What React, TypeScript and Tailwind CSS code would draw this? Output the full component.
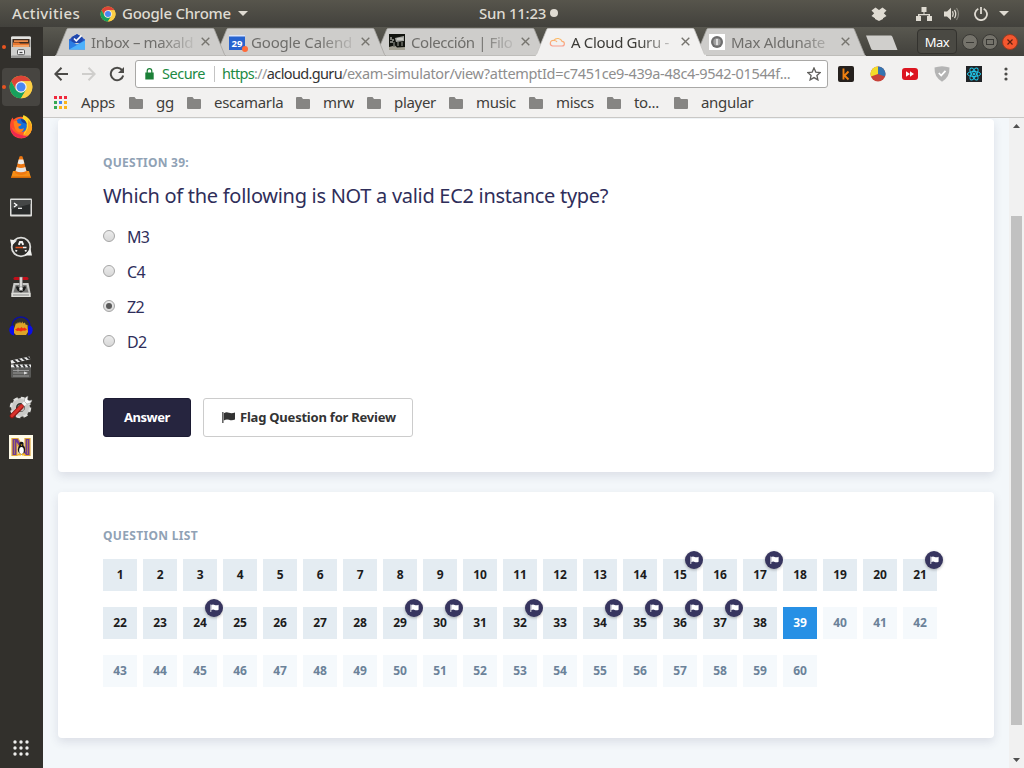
import type { ReactNode } from 'react';

const flagged = new Set([15, 17, 21, 24, 29, 30, 32, 34, 35, 36, 37]);
const CURRENT = 39;
const TOTAL = 60;

function ChromeIcon({ className }: { className: string }) {
  return (
    <svg viewBox="0 0 24 24" className={className}>
      <circle cx="12" cy="12" r="11.3" fill="#fbc93d" />
      <path d="M2.2 6.3A11.3 11.3 0 0 1 21.8 6.3H12L7 14.8Z" fill="#dd4437" />
      <path d="M2.2 6.3A11.3 11.3 0 0 0 12 23.3L17 14.9 12 17.5 7 14.9Z" fill="#17a05d" />
      <path d="M12 6.3H21.8A11.3 11.3 0 0 1 12 23.3L17 14.9Z" fill="#fdcf45" />
      <circle cx="12" cy="12" r="5.7" fill="#f4f4f4" />
      <circle cx="12" cy="12" r="4.5" fill="#4a87f2" />
    </svg>
  );
}

function FilesIcon() {
  return (
    <svg viewBox="0 0 24 24" className="size-6">
      <rect x="2" y="1.5" width="20" height="21.5" rx="1.5" fill="#b9b9b7" />
      <rect x="2" y="1.5" width="20" height="3" rx="1" fill="#e3e3e1" />
      <rect x="3.5" y="4" width="17" height="9" fill="#3d2b20" />
      <path d="M5 5.2H19V7H5Z" fill="#e88a4a" />
      <path d="M4 7.4H10L11 8.4H20V13H4Z" fill="#e9772f" />
      <path d="M4 10H20V13H4Z" fill="#f2a468" />
      <rect x="2" y="12" width="20" height="11" rx="1" fill="#cfcfcd" />
      <rect x="2" y="20.5" width="20" height="2.5" rx="1" fill="#989896" />
      <rect x="8.5" y="14.7" width="7" height="5" rx="1" fill="#f5f5f5" stroke="#555" />
      <path d="M10.5 17.5H13.5" stroke="#444" strokeWidth="1.3" />
    </svg>
  );
}

function FirefoxIcon() {
  return (
    <svg viewBox="0 0 24 24" className="size-6">
      <circle cx="12" cy="12.5" r="10.8" fill="#ff5a28" />
      <path d="M1.200 12Q.8 6 3.500 2.500L5 5.500L8 5L7 14Z" fill="#ff4a2a" />
      <path d="M14.500 0Q21.500 3 23 10Q23.800 17 17 22Q12 20 17 15Q19 9 14 5Q13 2.500 14.500 0Z" fill="#ffd829" />
      <path d="M19 5Q23.500 9 23 14Q21 22 12 23.300Q17 18 19 13Z" fill="#ffa21f" />
      <path d="M7.500 5.500Q10 2.500 14 4Q18 6.500 17.700 11.500Q17 17 12 17Q7.500 16.500 6.500 12Z" fill="#1470dc" />
      <path d="M12 4Q17 4 18 10Q17 8 15 8Q12 7 12 4Z" fill="#1b3f9b" />
      <path d="M4.500 6.500L8 5.500Q8 8 10 8.500L12.500 9Q12 11 9.500 11.500Q9 13.700 11.500 14Q14 14 15 13Q14 17.500 10 17.500Q5 16 4.500 6.500Z" fill="#ff7d1b" />
      <path d="M1.300 10Q1 22 12 23.300Q17 23 19.500 20.500Q14 21.500 9 19Q3 16.500 1.300 10Z" fill="#ee2950" />
    </svg>
  );
}

function VlcIcon() {
  return (
    <svg viewBox="0 0 24 24" className="size-6">
      <path d="M4 16H20L22 23H2Z" fill="#f58e16" />
      <path d="M2.300 21.500H21.700L22 23H2Z" fill="#d56a08" />
      <path d="M10.500 1.500Q12 .5 13.500 1.500L18 18Q12 22 6 18Z" fill="#ee7711" />
      <path d="M9.700 4.500H14.300L15.400 8.500Q12 10 8.600 8.500Z" fill="#ececec" />
      <path d="M7.700 12Q12 14 16.300 12L17.400 16Q12 18.500 6.600 16Z" fill="#e4e4e4" />
    </svg>
  );
}

function TerminalIcon() {
  return (
    <svg viewBox="0 0 24 24" className="size-6">
      <rect x="1" y="3.500" width="22" height="18" rx="1" fill="#dededc" />
      <rect x="2.500" y="5" width="19" height="14.500" fill="#292b2b" />
      <path d="M2.500 5H21.500V9L2.500 14Z" fill="#454747" />
      <path d="M5 8L7.800 10 5 12" fill="none" stroke="#fff" strokeWidth="1.300" />
      <path d="M9 13.300H13" stroke="#fff" strokeWidth="1.200" />
    </svg>
  );
}

function UpdaterIcon() {
  return (
    <svg viewBox="0 0 24 24" className="size-6">
      <circle cx="12" cy="12" r="9.300" fill="#2c2b28" stroke="#dcdcda" strokeWidth="1.800" />
      <path d="M1 4.500L8 5.500 2.500 11Z" fill="#f0f0ee" />
      <path d="M23 20.500L15.500 20.500 21.500 14Z" fill="#f0f0ee" />
      <path d="M9.800 9.800L11 7H13L14.200 9.800M7 16.500L7.500 15M17 16.500L16.500 15" fill="none" stroke="#f4f4f4" strokeWidth="2" />
      <path d="M6.500 12.500H14" stroke="#e95420" strokeWidth="1.500" />
      <path d="M14 12.500H17.500" stroke="#eee" strokeWidth="1.500" />
    </svg>
  );
}

function InstallerIcon() {
  return (
    <svg viewBox="0 0 24 24" className="-mt-[1px] size-6">
      <path d="M4.500 8H19.500L21.500 18V22H2.500V18Z" fill="#c9c9c7" />
      <path d="M6.500 10H17.500L19.500 17.500H4.500Z" fill="#747472" />
      <path d="M2.500 18H21.500V22H2.500Z" fill="#deded9" />
      <path d="M4 20H20" stroke="#888" />
      <rect x="4.500" y="2" width="15" height="3" rx="1.500" fill="#c00f1a" />
      <path d="M10.500 2H13.500V12H10.500Z" fill="#d8d8d6" stroke="#666" strokeWidth=".5" />
      <path d="M7 12Q8 10.500 10 12.500V16H14V12.500Q16 10.500 17 12Q16.500 16 12 17.500Q7.500 16 7 12Z" fill="#191919" />
      <circle cx="12" cy="13.500" r="1.500" fill="#f4f4f4" />
    </svg>
  );
}

function AudacityIcon() {
  return (
    <svg viewBox="0 0 24 24" className="size-6">
      <path d="M5 14L7 8 8 9 9 7 10 8.500 11 6.500 12 8.500 13.500 6.500 14 8.500 16 7.500 16.500 9.500 18.500 10 19 17 17 20H7L5 18Z" fill="#dda428" />
      <path d="M6 14.500L8 13.500 9 12.500 11 13.500 12.500 12 14 13.500 15.500 12.500 18 14.500 16 15.800 14 15.500 12 16.500 10 15.700 8 16Z" fill="#f42c10" />
      <path d="M3 15V11A9 9 0 0 1 21 11V15" fill="none" stroke="#0d119f" strokeWidth="1.600" />
      <path d="M5 10.500Q0 10.500 .3 15.500Q1 20 5 20.500Z" fill="#0b0ee8" />
      <path d="M19 10.500Q24 10.500 23.700 15.500Q23 20 19 20.500Z" fill="#0b0ee8" />
    </svg>
  );
}

function ClapperIcon() {
  return (
    <svg viewBox="0 0 24 24" className="-mt-[1px] size-6">
      <path d="M1.500 5.500L20.500 1.500 21.300 4.200 2.300 8.700Z" fill="#eee" />
      <path d="M4.500 5L8 7.800M9 4L12.500 6.600M13.500 3.100L17 5.400M18 2L21 4" stroke="#333" strokeWidth="1.800" />
      <rect x="2" y="9.800" width="20" height="13" rx="1" fill="#5a5a58" />
      <rect x="2" y="9.500" width="20" height="2.800" fill="#eee" />
      <path d="M5 9.500L7 12.500M9.500 9.500L11.500 12.500M14 9.500L16 12.500M18.500 9.500L20.500 12.500" stroke="#333" strokeWidth="1.800" />
      <path d="M4 15.500H20M4 18H18M9 13.500V17M4 21H20" stroke="#aaa" strokeWidth=".8" />
      <path d="M15 16.500L19 18 15 19.500Z" fill="#ddd" />
    </svg>
  );
}

function ToolsIcon() {
  return (
    <svg viewBox="0 0 24 24" className="size-6">
      <circle cx="11.500" cy="12.500" r="7" fill="none" stroke="#c9c9c7" strokeWidth="5" />
      <circle cx="11.500" cy="12.500" r="9.600" fill="none" stroke="#dededc" strokeWidth="2.400" strokeDasharray="4.500 3.040" />
      <circle cx="12" cy="13" r="3.500" fill="#b8b8b6" />
      <path d="M13 11L18.500 5.500" stroke="#f4f4f4" strokeWidth="3.500" />
      <path d="M15.500 6.500Q15 2 19 1.200L18.500 4.500 20 5.800 23 5Q22.500 9 18 9Z" fill="#f7f7f7" stroke="#8a8a88" strokeWidth=".5" />
      <path d="M3 21L12.500 11.500" stroke="#8f1512" strokeWidth="4.600" strokeLinecap="round" />
      <path d="M3 20.700L12.500 11.200" stroke="#d9322c" strokeWidth="3" strokeLinecap="round" />
    </svg>
  );
}

function NetIcon() {
  return (
    <svg viewBox="0 0 24 24" className="size-6">
      <rect width="24" height="24" fill="#fffbe9" />
      <path d="M3 3.500H9L16 15V3.500H21V20.500H16L8 9V20.500H3Z" fill="#713a92" stroke="#e0a637" strokeWidth="1.200" />
      <path d="M5.500 5V19M18.500 5V19" stroke="#b58a4a" strokeWidth=".8" />
      <ellipse cx="12.500" cy="14.500" rx="3.600" ry="5" fill="#151515" />
      <circle cx="12.500" cy="9" r="2.200" fill="#151515" />
      <ellipse cx="12.500" cy="15.500" rx="2.300" ry="3.600" fill="#fff" />
      <path d="M11.500 9.500H13.500L12.500 11ZM9 18.500H12V20.500H8ZM13 18.500H16L17 20.500H13Z" fill="#f5b521" />
    </svg>
  );
}

const dock: { id: string; icon: ReactNode; running?: boolean; active?: boolean }[] = [
  { id: 'files', icon: <FilesIcon />, running: true },
  { id: 'chrome', icon: <ChromeIcon className="size-6" />, running: true, active: true },
  { id: 'firefox', icon: <FirefoxIcon /> },
  { id: 'vlc', icon: <VlcIcon /> },
  { id: 'terminal', icon: <TerminalIcon /> },
  { id: 'updater', icon: <UpdaterIcon /> },
  { id: 'installer', icon: <InstallerIcon /> },
  { id: 'audacity', icon: <AudacityIcon /> },
  { id: 'clapper', icon: <ClapperIcon /> },
  { id: 'tools', icon: <ToolsIcon /> },
  { id: 'netbeans', icon: <NetIcon /> },
];

function Dock() {
  return (
    <nav className="flex w-[43px] shrink-0 flex-col bg-[#32302c]">
      {dock.map((d) => (
        <div key={d.id} className="relative flex h-10 items-center pl-[2px]">
          <div
            className={
              d.active
                ? 'flex h-[38px] w-[38px] items-center justify-center rounded bg-white/10'
                : 'flex h-[38px] w-[38px] items-center justify-center'
            }
          >
            {d.icon}
          </div>
          {d.running && <span className="absolute top-[18px] left-[2px] size-[4px] rounded-full bg-[#e95420]" />}
        </div>
      ))}
      <svg viewBox="0 0 16 16" className="mt-auto mb-[12px] ml-[13px] size-4 fill-[#eeeeec]">
        {[2, 8, 14].map((y) => [2, 8, 14].map((x) => <circle key={`${x}-${y}`} cx={x} cy={y} r="1.700" />))}
      </svg>
    </nav>
  );
}

function TopBar() {
  return (
    <header className="flex h-[27px] shrink-0 items-center bg-linear-to-b from-[#57554c] to-[#42413c] pl-3 text-[15px] font-medium whitespace-nowrap text-[#dfdbd2]">
      <span className="w-[88px] tracking-[0.34px]">Activities</span>
      <ChromeIcon className="size-4" />
      <span className="ml-[6px] w-[116px] tracking-[-0.24px]">Google Chrome</span>
      <svg viewBox="0 0 10 5" className="h-[5px] w-[10px] fill-[#dfdbd2]"><path d="M0 0H10L5 5Z" /></svg>
      <span className="-mt-px ml-[231px] w-[71px] tracking-[-0.26px]">Sun 11:23</span>
      <span className="-mt-px size-2 rounded-full bg-[#dfdbd2]" />
      <svg viewBox="0 0 16 14" className="ml-[313px] h-[14px] w-4 fill-[#dfdbd2]">
        <path d="M4.500.5L8 3 11.500.5 15.500 3.500 12.800 6.300 15.500 9 12 11.300V12L8 14 4 12V11.300L.5 9 3.200 6.300.5 3.500Z" />
      </svg>
      <svg viewBox="0 0 16 14" className="ml-[29px] h-[14px] w-4 fill-[#dfdbd2]">
        <path d="M5.500 0H10.500V5H8.500V7H14V9H16V14H11V9H12.500V8.200H3.500V9H5V14H0V9H2V7H7.500V5H5.500Z" />
      </svg>
      <svg viewBox="0 0 16 14" className="ml-[12px] h-[14px] w-4 fill-none stroke-[#dfdbd2]">
        <path d="M0 4.500H3L7 .8V13.200L3 9.500H0Z" className="fill-[#dfdbd2] stroke-none" />
        <path d="M8.500 4.300Q10 7 8.500 9.700M10.500 2.800Q13 7 10.500 11.200" strokeWidth="1.300" />
        <path d="M12.500 1Q16.500 7 12.500 13" strokeWidth="1.200" opacity=".4" />
      </svg>
      <svg viewBox="0 0 14 14" className="ml-[14px] size-[14px] fill-none stroke-[#dfdbd2] stroke-[1.800]">
        <path d="M4.300 1.800A6 6 0 1 0 9.700 1.800M7 0V7" />
      </svg>
      <svg viewBox="0 0 10 5" className="ml-[11px] h-[5px] w-[10px] fill-[#dfdbd2]"><path d="M0 0H10L5 5Z" /></svg>
    </header>
  );
}

function CloseX() {
  return (
    <svg viewBox="0 0 9 9" className="size-[9px] fill-none stroke-[#77756f] stroke-[1.400]"><path d="M.7.7L8.300 8.300M8.300.7L.7 8.300" /></svg>
  );
}

const InboxIcon = (
  <svg viewBox="0 0 16 16" className="size-4">
    <path d="M0 5.500L8 0 16 5.500V8H0Z" fill="#2a56c6" />
    <path d="M2.500 3L8 .3 13.500 3V9H2.500Z" fill="#2148ad" />
    <path d="M5 4.500L7.300 6.800 12.500 1.500" stroke="#fff" strokeWidth="1.700" fill="none" />
    <path d="M0 6L8 10.500 16 6V15.500H0Z" fill="#2b7de4" />
    <path d="M0 15.500L16 6.500V15.500Z" fill="#4db1fb" />
  </svg>
);

const CalendarIcon = (
  <svg viewBox="0 0 20 18" className="mt-[2px] h-[18px] w-5">
    <rect x="0" y="1" width="16" height="15" rx=".5" fill="#2763cf" />
    <path d="M0 1H16V2.500H0Z" fill="#dbe5fa" />
    <text x="8" y="12.500" textAnchor="middle" fontSize="9.500" fontWeight="700" fontFamily="Noto Sans, sans-serif" fill="#fff">29</text>
    <circle cx="16" cy="15" r="3" fill="#ff6a39" />
  </svg>
);

const PhotoIcon = (
  <svg viewBox="0 0 16 16" className="size-4">
    <rect width="16" height="16" fill="#12140f" />
    <path d="M6 4L15 2V7L7 8Z" fill="#a9aaa5" />
    <path d="M2 3V6M4 5V7M8 5H14M1 8H4" stroke="#e6e6e0" />
    <path d="M0 13L6 11.500 8 13.500 16 13V16H0Z" fill="#a5a294" />
    <path d="M5 8V13M9 8V12M13 8V12" stroke="#6d6f68" strokeWidth="1.500" />
  </svg>
);

const CloudIcon = (
  <svg viewBox="0 0 16 12" className="h-3 w-4 fill-none stroke-[1.200]">
    <defs>
      <linearGradient id="cloud" x1="0" y1="0" x2="0" y2="1">
        <stop offset="0" stopColor="#fbb862" />
        <stop offset="1" stopColor="#f99d8e" />
      </linearGradient>
    </defs>
    <path stroke="url(#cloud)" d="M3.500 10H13A2.300 2.300 0 0 0 13 5.300A4.500 4 0 0 0 4.800 4.500A2.800 2.800 0 0 0 3.500 10ZM5 4.500Q7 4.300 8 6" />
  </svg>
);

const InfoIcon = (
  <svg viewBox="0 0 16 16" className="size-4">
    <rect width="16" height="16" fill="#fff" />
    <circle cx="8" cy="8" r="6" fill="#6e6e6e" />
    <circle cx="8" cy="8" r="3.700" fill="#a0a0a0" />
    <path d="M8 5V11" stroke="#eee" strokeWidth="1.600" />
  </svg>
);

function Tab({ icon, title, tracking, active, stack }: { icon: ReactNode; title: string; tracking: string; active?: boolean; stack: string }) {
  return (
    <div className={`relative -mr-3 flex h-[28px] w-[172px] shrink-0 items-center pb-px pl-[14px] ${stack}`}>
      <svg viewBox="0 0 172 28" className="absolute inset-0 h-[28px] w-[172px]">
        <path
          d="M0 28L1.500 26.500 11.700 1.500Q12.200.3 14 .3H157Q158.800.3 159.300 1.500L169.500 26.500 171 28Z"
          fill={active ? '#f2f1f0' : '#cecdcb'}
          stroke={active ? '#c5c4c1' : '#a6a5a1'}
          strokeWidth=".8"
        />
        {active && <path d="M1 27.500H171" stroke="#f2f1f0" strokeWidth="1.600" />}
      </svg>
      <span className="relative flex h-[18px] w-[22px] shrink-0 items-center">{icon}</span>
      <span
        className={`relative h-[26px] w-[104px] overflow-hidden text-[15px] leading-[26px] whitespace-nowrap [mask-image:linear-gradient(to_right,black_65%,transparent_105%)] ${tracking} ${active ? 'text-[#3c3b37]' : 'text-[#6f6e6b]'}`}
      >
        {title}
      </span>
      <span className="relative ml-[6px]"><CloseX /></span>
    </div>
  );
}

function TabStrip() {
  return (
    <div className="flex h-[29px] shrink-0 items-end bg-linear-to-b from-[#595850] to-[#42413c] pl-[12px]">
      <Tab icon={InboxIcon} title="Inbox – maxald" tracking="tracking-[-0.38px]" stack="z-30" />
      <Tab icon={CalendarIcon} title="Google Calend" tracking="tracking-[-0.17px]" stack="z-20" />
      <Tab icon={PhotoIcon} title="Colección | Filo" tracking="tracking-[-0.42px]" stack="z-10" />
      <Tab icon={CloudIcon} title="A Cloud Guru -" tracking="tracking-[-0.34px]" stack="z-40" active />
      <Tab icon={InfoIcon} title="Max Aldunate" tracking="tracking-[-0.28px]" stack="z-0" />
      <svg viewBox="0 0 33 16" className="mb-[5px] ml-[10px] h-4 w-[33px] shrink-0"><path d="M1 .5H26Q27 .5 27.500 2L32.500 15H8Q6.500 15 6 13.500Z" fill="#d0cfcc" /></svg>
      <div className="mb-[2px] ml-[19px] h-[25px] w-10 shrink-0 rounded border border-[#33322e] bg-[#4a4943] text-center text-[13px] leading-[24px] tracking-[-0.5px] text-white">Max</div>
      <div className="mb-[6px] ml-[5px] flex gap-[4px]">
        <svg viewBox="0 0 16 16" className="size-4"><circle cx="8" cy="8" r="7.500" fill="#75736b" stroke="#3a3935" /><path d="M4 8.500H12" stroke="#3a3935" /></svg>
        <svg viewBox="0 0 16 16" className="size-4"><circle cx="8" cy="8" r="7.500" fill="#75736b" stroke="#3a3935" /><rect x="4.500" y="5.500" width="7" height="5" fill="none" stroke="#3a3935" /></svg>
        <svg viewBox="0 0 16 16" className="size-4"><circle cx="8" cy="8" r="7.500" fill="#f4572f" stroke="#9a3a22" /><path d="M5.500 5.500L10.500 10.500M10.500 5.500L5.500 10.500" stroke="#5a1f10" strokeWidth="1.200" /></svg>
      </div>
    </div>
  );
}

function AddressBar() {
  return (
    <div className="flex h-[36px] shrink-0 items-center bg-[#f2f1f0] pl-[11px] text-[14.5px] whitespace-nowrap">
      <svg viewBox="0 0 14 14" className="size-[14px] fill-none stroke-[#4c4b48] stroke-2"><path d="M14 7H1.500M7.500.8L1.300 7 7.500 13.200" /></svg>
      <svg viewBox="0 0 14 14" className="ml-[14px] size-[14px] fill-none stroke-[#cfcecc] stroke-2"><path d="M0 7H12.500M6.500.8L12.700 7 6.500 13.200" /></svg>
      <svg viewBox="0 0 16 16" className="ml-[13px] size-4 fill-none stroke-[#4c4b48] stroke-2"><path d="M13 4A6.300 6.300 0 1 0 14.200 9.500" /><path d="M15 1V7H9Z" className="fill-[#4c4b48] stroke-none" /></svg>
      <div className="ml-[10px] flex h-7 w-[693px] shrink-0 items-center rounded-[3px] border border-[#a9a8a6] bg-white pl-[9px]">
        <svg viewBox="0 0 9 12" className="h-3 w-[9px]"><path d="M.3 4.500H8.700V11.500H.3Z" fill="#1c8038" /><path d="M2.200 5V3A2.300 2.300 0 0 1 6.800 3V5" fill="none" stroke="#1c8038" strokeWidth="1.200" /></svg>
        <span className="ml-[8px] w-[52px] tracking-[-0.49px] text-[#1c8a43]">Secure</span>
        <span className="h-4 w-px bg-[#c4c4c4]" />
        <span className="ml-[7px] w-[120px] tracking-[-0.64px] text-[#333]">
          <span className="text-[#1c8a43]">https</span>
          <span className="text-[#999]">://</span>acloud.guru
        </span>
        <span className="w-[465px] tracking-[-0.33px] text-[#8e8e8e]">/exam-simulator/view?attemptId=c7451ce9-439a-48c4-9542-01544f...</span>
        <svg viewBox="0 0 14 14" className="size-[14px] fill-none stroke-[#5f5e5b] stroke-[1.300]"><path d="M7 .9L8.800 5.100 13.300 5.500 9.900 8.500 10.900 12.900 7 10.600 3.100 12.900 4.100 8.500.7 5.500 5.200 5.100Z" /></svg>
      </div>
      <div className="ml-[10px] flex items-center gap-4">
        <svg viewBox="0 0 16 16" className="size-4"><rect width="16" height="16" rx="2" fill="#25201d" /><path d="M5.500 2.500V13.500M10.500 5.500L6.500 9.500 10.500 13.500" fill="none" stroke="#f08010" strokeWidth="1.900" /></svg>
        <svg viewBox="0 0 16 16" className="size-4"><circle cx="8" cy="8" r="7.500" fill="#c8423a" /><path d="M8 8V.5A7.500 7.500 0 0 1 15 10.500Z" fill="#3574b0" /><path d="M8 8V.5A7.500 7.500 0 0 0 1 10.500Z" fill="#f3dc2a" /></svg>
        <svg viewBox="0 0 16 16" className="size-4"><rect y="2" width="16" height="12" rx="3" fill="#dc1520" /><path d="M4 5.300L8 8 4 10.700ZM8 5.300L12 8 8 10.700Z" fill="#fff" /></svg>
        <svg viewBox="0 0 16 16" className="size-4"><path d="M.5 1.500Q4 .5 8 .3Q12 .5 15.500 1.500Q16 11 8 15.700Q0 11 .5 1.500Z" fill="#b4b4b4" /><path d="M4.800 7L7.200 9.500 11.500 4.800" fill="none" stroke="#fff" strokeWidth="1.800" /></svg>
        <svg viewBox="0 0 16 16" className="size-4 fill-none stroke-[#20c5e8]">
          <rect width="16" height="16" fill="#202326" stroke="none" />
          <ellipse cx="8" cy="8" rx="6.600" ry="2.500" />
          <ellipse cx="8" cy="8" rx="6.600" ry="2.500" transform="rotate(60 8 8)" />
          <ellipse cx="8" cy="8" rx="6.600" ry="2.500" transform="rotate(120 8 8)" />
          <circle cx="8" cy="8" r="1" fill="#20c5e8" />
        </svg>
      </div>
      <svg viewBox="0 0 4 14" className="ml-[22px] h-[14px] w-1 fill-[#4c4b48]"><circle cx="2" cy="2" r="1.600" /><circle cx="2" cy="7" r="1.600" /><circle cx="2" cy="12" r="1.600" /></svg>
    </div>
  );
}

const bookmarks: { name: string; width: string }[] = [
  { name: 'gg', width: 'w-[31px]' },
  { name: 'escamarla', width: 'w-[82px]' },
  { name: 'mrw', width: 'w-[44px]' },
  { name: 'player', width: 'w-[55px]' },
  { name: 'music', width: 'w-[53px]' },
  { name: 'miscs', width: 'w-[51px]' },
  { name: 'to...', width: 'w-[40px]' },
  { name: 'angular', width: 'w-[60px]' },
];

const appDots = ['#f0283c', '#f0283c', '#f0283c', '#35a853', '#4285f4', '#fbb51c', '#35a853', '#fbb51c', '#fbb51c'];

function BookmarksBar() {
  return (
    <div className="flex h-[26px] shrink-0 items-start border-b border-[#c9c8c6] bg-[#f2f1f0] pl-[11px] text-[15px] leading-[20px] tracking-[-0.32px] whitespace-nowrap text-[#3f3e3b]">
      <div className="mt-[4px] grid grid-cols-3 gap-[2px]">
        {appDots.map((c, i) => <span key={i} className="size-[3px]" style={{ backgroundColor: c }} />)}
      </div>
      <span className="ml-[14px] w-[48px]">Apps</span>
      {bookmarks.map((b) => (
        <div key={b.name} className="flex items-start">
          <svg viewBox="0 0 14 12" className="mt-[5px] h-3 w-[14px] fill-[#868583]"><path d="M0 1Q0 0 1 0H5.500L7 2H13Q14 2 14 3V11Q14 12 13 12H1Q0 12 0 11Z" /></svg>
          <span className={`ml-[13px] ${b.width}`}>{b.name}</span>
        </div>
      ))}
    </div>
  );
}

function FlagGlyph({ className }: { className: string }) {
  return (
    <svg viewBox="0 0 13 11" className={className}>
      <path d="M0 0H1.600V11H0Z" opacity=".75" />
      <path d="M1.800 1.200Q4.500-.4 7 .8Q9.500 1.800 13 .6V7.600Q9.800 9 7 7.800Q4.500 6.800 1.800 8.400Z" />
    </svg>
  );
}

function Option({ label, checked }: { label: string; checked?: boolean }) {
  return (
    <div className="flex h-[35px] items-center">
      <span className="-mt-[2px] flex size-3 items-center justify-center rounded-full border border-[#a5a5a5] bg-linear-to-b from-[#ececec] to-[#d8d8d8]">
        {checked && <span className="size-[6px] rounded-full bg-[#5a5a5a]" />}
      </span>
      <span className="ml-3 text-[16px] tracking-[-0.7px]">{label}</span>
    </div>
  );
}

function QuestionCard() {
  return (
    <section className="mt-px h-[353px] shrink-0 rounded bg-white pt-[35px] pl-[45px] text-[#2f2e5a] shadow-[0_4px_10px_rgba(50,50,93,0.12)]">
      <h2 className="h-[18px] text-[12px] leading-[18px] font-bold tracking-[0.25px] text-[#90a2b5]">QUESTION 39:</h2>
      <p className="mt-[9px] h-[30px] text-[20px] leading-[30px] tracking-[-0.29px]">Which of the following is NOT a valid EC2 instance type?</p>
      <div className="mt-[8px]">
        <Option label="M3" />
        <Option label="C4" />
        <Option label="Z2" checked />
        <Option label="D2" />
      </div>
      <div className="mt-[39px] flex gap-3 text-[13px] font-bold">
        <button className="h-[39px] w-[88px] rounded-[3px] border border-[#1c1b33] bg-[#26253f] tracking-[-0.45px] text-white">Answer</button>
        <button className="flex h-[39px] w-[210px] items-center rounded-[3px] border border-[#cccccc] bg-white pl-[18px] tracking-[-0.22px] text-[#333333]">
          <FlagGlyph className="h-[11px] w-[13px] fill-[#333333]" />
          <span className="ml-[5px]">Flag Question for Review</span>
        </button>
      </div>
    </section>
  );
}

function cellStyle(n: number) {
  if (n === CURRENT) return 'bg-[#2790e5] text-white';
  return n < CURRENT ? 'bg-[#e4ecf2] text-[#1c1c1c]' : 'bg-[#f5f9fc] text-[#6b8299]';
}

function QuestionList() {
  return (
    <section className="mt-5 h-[246px] shrink-0 rounded bg-white pt-[35px] pl-[45px] shadow-[0_4px_10px_rgba(50,50,93,0.12)]">
      <h2 className="h-[18px] text-[12px] leading-[18px] font-bold tracking-[0.32px] text-[#90a2b5]">QUESTION LIST</h2>
      <div className="mt-[14px] grid w-[834px] grid-cols-[repeat(21,34px)] gap-x-[6px] gap-y-4">
        {Array.from({ length: TOTAL }, (_, i) => i + 1).map((n) => (
          <div key={n} className={`relative h-8 text-center text-[12px] leading-[32px] font-bold tracking-[-0.12px] ${cellStyle(n)}`}>
            {n}
            {flagged.has(n) && (
              <span className="absolute -top-2 -right-[6px] flex size-[18px] items-center justify-center rounded-full bg-[#37355f] shadow-[0_1px_3px_rgba(0,0,0,0.3)]">
                <svg viewBox="0 0 9 8" className="h-2 w-[9px] fill-white">
                  <path d="M.3.5H1.300V8H.3Z" opacity=".8" />
                  <path d="M1.300 1Q3 .2 4.700 1Q6.500 1.700 8.600.8V5.700Q6.500 6.600 4.700 5.900Q3 5.200 1.300 6.200Z" />
                </svg>
              </span>
            )}
          </div>
        ))}
      </div>
    </section>
  );
}

function Scrollbar() {
  return (
    <div className="flex w-[15px] shrink-0 flex-col items-center bg-[#f1f1f1]">
      <svg viewBox="0 0 7 4" className="mt-[6px] h-1 w-[7px] fill-[#505050]"><path d="M0 4H7L3.500 0Z" /></svg>
      <div className="mt-[88px] h-[509px] w-[11px] bg-[#c1c1c1]" />
      <svg viewBox="0 0 7 4" className="mt-[33px] h-1 w-[7px] fill-[#505050]"><path d="M0 0H7L3.500 4Z" /></svg>
    </div>
  );
}

export default function App() {
  return (
    <div className="flex h-[768px] w-[1024px] flex-col overflow-hidden font-['Noto_Sans','Open_Sans',sans-serif]">
      <TopBar />
      <div className="flex min-h-0 flex-1">
        <Dock />
        <div className="flex min-w-0 flex-1 flex-col">
          <TabStrip />
          <AddressBar />
          <BookmarksBar />
          <div className="flex min-h-0 flex-1 bg-[#f3f7fa]">
            <main className="flex min-w-0 flex-1 flex-col overflow-hidden px-[15px]">
              <QuestionCard />
              <QuestionList />
            </main>
            <Scrollbar />
          </div>
        </div>
      </div>
    </div>
  );
}
